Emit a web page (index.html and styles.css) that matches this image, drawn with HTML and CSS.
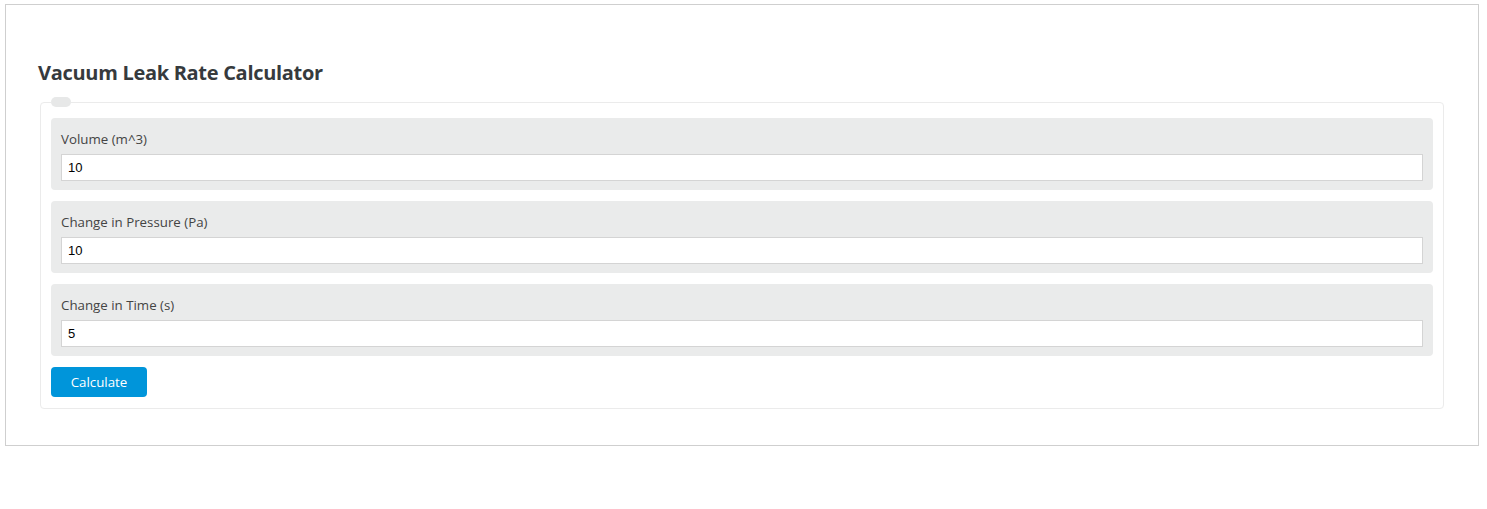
FILE: index.html
```html
<!DOCTYPE html>
<html lang="en">
<head>
<meta charset="utf-8">
<title>Vacuum Leak Rate Calculator</title>
<link rel="stylesheet" href="styles.css">
</head>
<body>
<div class="page">
  <h2 class="title">Vacuum Leak Rate Calculator</h2>
  <fieldset class="calc">
    <legend class="calc-legend"></legend>
    <div class="field">
      <label class="field-label" for="v">Volume (m^3)</label>
      <input class="field-input" id="v" type="text" value="10">
    </div>
    <div class="field">
      <label class="field-label" for="p">Change in Pressure (Pa)</label>
      <input class="field-input" id="p" type="text" value="10">
    </div>
    <div class="field">
      <label class="field-label" for="t">Change in Time (s)</label>
      <input class="field-input" id="t" type="text" value="5">
    </div>
    <button class="btn" type="button">Calculate</button>
  </fieldset>
</div>
</body>
</html>
```
FILE: styles.css
```css
html, body {
  margin: 0;
  padding: 0;
  background: #fff;
}
body {
  font-family: "Open Sans", "Noto Sans", sans-serif;
  color: #333;
}
.page {
  margin: 4px 8px 0 5px;
  border: 1px solid #cfcfcf;
  padding: 56px 34px 36px 32px;
}
.title {
  margin: 0 0 12px 0;
  font-size: 20px;
  line-height: 24px;
  font-weight: 700;
  color: #363a3d;
  letter-spacing: -0.3px;
}
.calc {
  margin: 0 0 0 2px;
  border: 1px solid #ebebeb;
  border-radius: 4px;
  padding: 11px 10px 11px 10px;
  min-width: 0;
}
.calc-legend {
  width: 20px;
  height: 10px;
  padding: 0;
  background: #e7e8e8;
  border-radius: 5px;
}
.field {
  background: #eaebeb;
  border-radius: 4px;
  padding: 11px 10px 9px 10px;
  margin-bottom: 11px;
}
.field-label {
  display: block;
  font-size: 13.3px;
  line-height: 20px;
  color: #444;
  margin-bottom: 5px;
}
.field-input {
  display: block;
  box-sizing: border-box;
  width: 100%;
  height: 27px;
  margin: 0;
  border: 1px solid #d4d4d4;
  background: #fff;
  padding: 0 6px;
  font-family: "Liberation Sans", Arial, sans-serif;
  font-size: 13px;
  color: #000;
  outline: none;
}
.btn {
  display: block;
  width: 96px;
  height: 30px;
  border: 0;
  border-radius: 4px;
  background: #0095da;
  color: #fff;
  font-family: "Open Sans", "Noto Sans", sans-serif;
  font-size: 13.3px;
  padding: 0;
  cursor: pointer;
}
```
